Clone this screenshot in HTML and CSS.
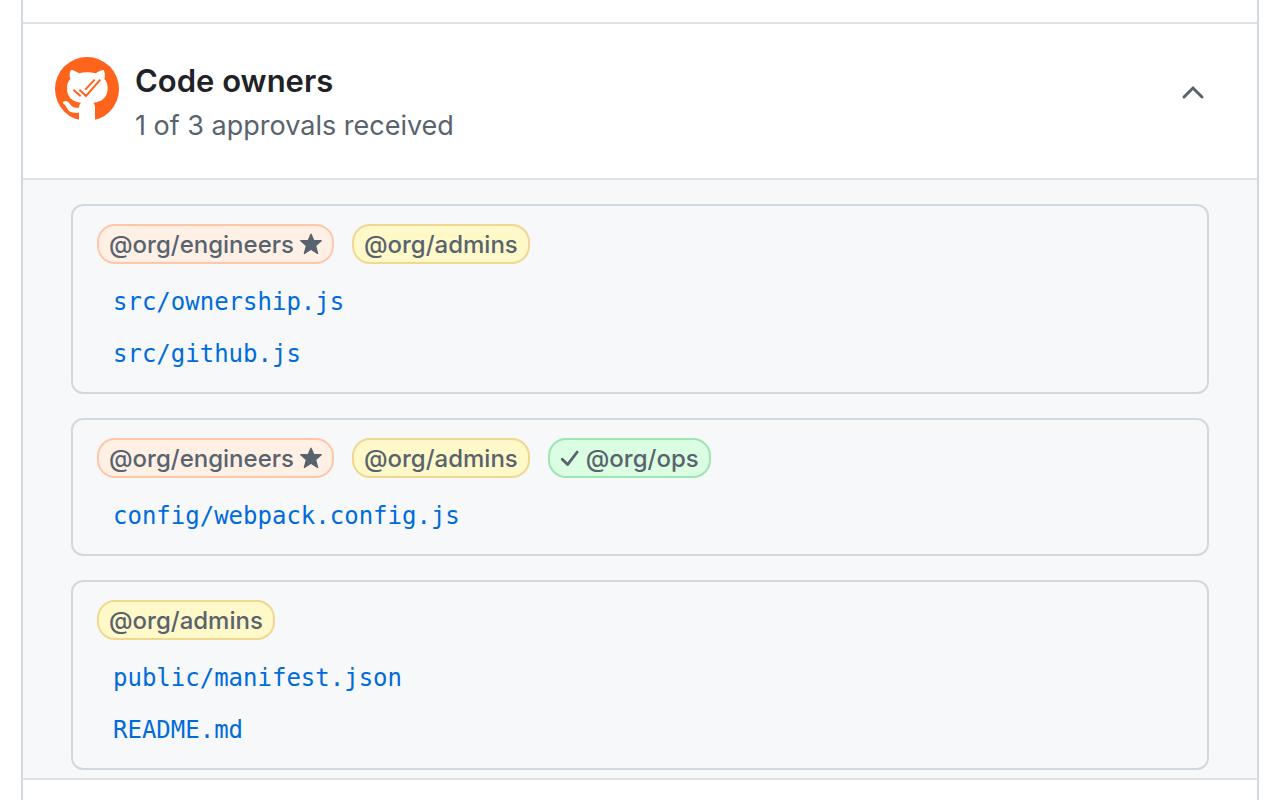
FILE: index.html
```html
<!DOCTYPE html>
<html lang="en">
<head>
<meta charset="utf-8">
<meta name="viewport" content="width=device-width, initial-scale=1">
<title>Code owners</title>
<link rel="stylesheet" href="styles.css">
</head>
<body>
<svg class="sprite" aria-hidden="true">
  <symbol id="star" viewBox="0 0 22 22"><path d="M11 1.2 13.8 7.7H21.2L15.5 12.6 17.6 20.4 11 16.2 4.4 20.4 6.5 12.6.8 7.7H8.2Z" fill="currentColor" stroke="currentColor" stroke-width="1.4" stroke-linejoin="round"/></symbol>
  <symbol id="check" viewBox="0 0 20 20"><path d="M2.2 11.2 7.6 16.6 17.2 4" fill="none" stroke="currentColor" stroke-width="2.8" stroke-linecap="round" stroke-linejoin="round"/></symbol>
</svg>
<main class="panel">
  <div class="previous"></div>
  <section class="check-section">
    <header class="header">
      <svg class="logo" viewBox="30 33 192 192" aria-hidden="true">
        <circle cx="126" cy="132" r="96" fill="#ff641d"/>
        <path fill="#fff" d="M78 75C85 75 94 80 102 85Q127 79 152 85C160 80 169 75 176 75Q182 87 178 102Q188 112 188 129C188 158 171 170 145 173Q150 178 150 188V230H102V203C82 205 71 201 66 190C62 180 58 178 54 175C51 170 57 167 64 168C72 170 75 179 81 184Q88 190 102 188Q102 178 108 173C82 170 66 158 66 129Q66 112 76 102C72 89 74 80 78 75Z"/>
        <path fill="none" stroke="#ff641d" stroke-width="6" d="M85 134 107 154M103 134 123 153 166 104M121 134 149 104"/>
      </svg>
      <div class="heading">
        <h1 class="title">Code owners</h1>
        <p class="subtitle">1 of 3 approvals received</p>
      </div>
      <button class="toggle" type="button" aria-label="Collapse code owners" aria-expanded="true">
        <svg width="24" height="16" viewBox="0 0 24 16"><path d="M3 13 12 4 21 13" fill="none" stroke="currentColor" stroke-width="3" stroke-linecap="round"/></svg>
      </button>
    </header>
    <div class="groups">
      <article class="group">
        <div class="owners">
          <span class="owner engineers">@org/engineers <svg class="star"><use href="#star"/></svg></span>
          <span class="owner admins">@org/admins</span>
        </div>
        <ul class="files">
          <li><a href="#ownership">src/ownership.js</a></li>
          <li><a href="#github">src/github.js</a></li>
        </ul>
      </article>
      <article class="group">
        <div class="owners">
          <span class="owner engineers">@org/engineers <svg class="star"><use href="#star"/></svg></span>
          <span class="owner admins">@org/admins</span>
          <span class="owner ops"><svg class="tick"><use href="#check"/></svg> @org/ops</span>
        </div>
        <ul class="files">
          <li><a href="#webpack">config/webpack.config.js</a></li>
        </ul>
      </article>
      <article class="group">
        <div class="owners">
          <span class="owner admins">@org/admins</span>
        </div>
        <ul class="files">
          <li><a href="#manifest">public/manifest.json</a></li>
          <li><a href="#readme">README.md</a></li>
        </ul>
      </article>
    </div>
  </section>
</main>
</body>
</html>
```

FILE: styles.css
```css
* { box-sizing: border-box; }
body {
  margin: 0;
  background: #fff;
  color: #59636e;
  font-family: Inter, "Liberation Sans", sans-serif;
}
.sprite { display: none; }
.panel {
  min-height: 100vh;
  margin: 0 21px;
  border: solid #d1d9e0;
  border-width: 0 2px;
}
.previous { height: 22px; }
.check-section {
  border: solid #dde3e8;
  border-width: 2px 0;
}
.header {
  display: flex;
  align-items: flex-start;
  gap: 16px;
  padding: 32px 52px 32px 32px;
}
.logo {
  flex: none;
  width: 64px;
  height: 64px;
  overflow: visible;
}
.heading { flex: 1; }
.title {
  margin: 0;
  color: #1f2328;
  font-size: 31px;
  font-weight: 600;
  line-height: 50px;
}
.subtitle {
  margin: 0;
  font-size: 27px;
  line-height: 40px;
}
.toggle {
  display: flex;
  margin: 28px 0 0;
  padding: 0;
  border: 0;
  background: none;
  color: #59636e;
  cursor: pointer;
}
.groups {
  display: flex;
  flex-direction: column;
  gap: 24px;
  padding: 24px 48px 8px;
  border-top: 2px solid #dde3e8;
  background: #f6f8fa;
}
.group {
  padding: 18px 24px 12px;
  border: 2px solid #d1d9e0;
  border-radius: 12px;
}
.owners {
  display: flex;
  flex-wrap: wrap;
  gap: 18px;
}
.owner {
  display: flex;
  align-items: center;
  gap: 6px;
  height: 40px;
  padding: 0 10px;
  border: 2px solid;
  border-radius: 18px;
  font-size: 24px;
  font-weight: 500;
}
.owner svg { flex: none; }
.star { width: 22px; height: 22px; }
.tick { width: 20px; height: 20px; }
.engineers { border-color: #ffc7a8; background: #fff0e6; }
.admins { border-color: #f0d890; background: #fff8c9; }
.ops { border-color: #9de5b3; background: #dbfde2; }
.files {
  margin: 12px 0 0;
  padding: 0 16px;
  list-style: none;
  font: 24px/52px "DejaVu Sans Mono", monospace;
}
.files a {
  color: #006bd9;
  text-decoration: none;
}
.files a:hover { text-decoration: underline; }
```
